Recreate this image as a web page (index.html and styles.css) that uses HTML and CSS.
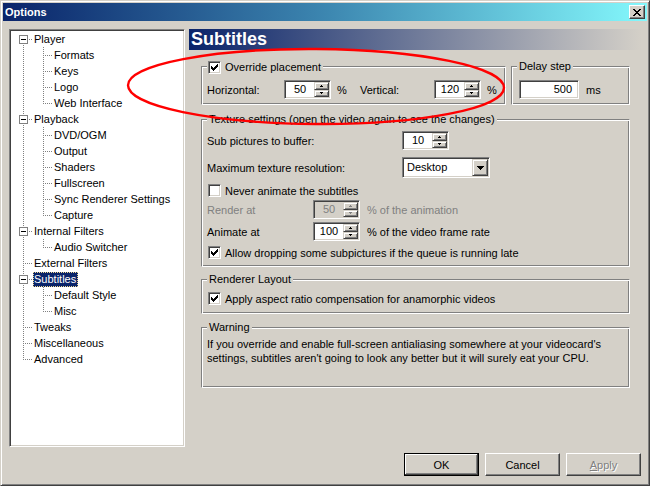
FILE: index.html
```html
<!DOCTYPE html>
<html>
<head>
<meta charset="utf-8">
<title>Options</title>
<link rel="stylesheet" href="styles.css">
</head>
<body>
<div class="window">
  <div class="titlebar">
    <span class="title">Options</span>
    <span class="close"><svg width="8" height="7" viewBox="0 0 8 7" shape-rendering="crispEdges"><path d="M0 0h2v1h-2z M6 0h2v1h-2z M1 1h2v1h-2z M5 1h2v1h-2z M2 2h4v1h-4z M3 3h2v1h-2z M2 4h4v1h-4z M1 5h2v1h-2z M5 5h2v1h-2z M0 6h2v1h-2z M6 6h2v1h-2z" fill="#000"/></svg></span>
  </div>
  <div class="client">
    <div class="main">
      <div class="tree">
        <div class="node"><span class="c c-f"><span class="exp"></span></span><span class="label">Player</span></div>
        <div class="node"><span class="c c-v"></span><span class="c c-t"></span><span class="label">Formats</span></div>
        <div class="node"><span class="c c-v"></span><span class="c c-t"></span><span class="label">Keys</span></div>
        <div class="node"><span class="c c-v"></span><span class="c c-t"></span><span class="label">Logo</span></div>
        <div class="node"><span class="c c-v"></span><span class="c c-l"></span><span class="label">Web Interface</span></div>
        <div class="node"><span class="c c-t"><span class="exp"></span></span><span class="label">Playback</span></div>
        <div class="node"><span class="c c-v"></span><span class="c c-t"></span><span class="label">DVD/OGM</span></div>
        <div class="node"><span class="c c-v"></span><span class="c c-t"></span><span class="label">Output</span></div>
        <div class="node"><span class="c c-v"></span><span class="c c-t"></span><span class="label">Shaders</span></div>
        <div class="node"><span class="c c-v"></span><span class="c c-t"></span><span class="label">Fullscreen</span></div>
        <div class="node"><span class="c c-v"></span><span class="c c-t"></span><span class="label">Sync Renderer Settings</span></div>
        <div class="node"><span class="c c-v"></span><span class="c c-l"></span><span class="label">Capture</span></div>
        <div class="node"><span class="c c-t"><span class="exp"></span></span><span class="label">Internal Filters</span></div>
        <div class="node"><span class="c c-v"></span><span class="c c-l"></span><span class="label">Audio Switcher</span></div>
        <div class="node"><span class="c c-t"></span><span class="label">External Filters</span></div>
        <div class="node"><span class="c c-t"><span class="exp"></span></span><span class="label selected">Subtitles</span></div>
        <div class="node"><span class="c c-v"></span><span class="c c-t"></span><span class="label">Default Style</span></div>
        <div class="node"><span class="c c-v"></span><span class="c c-l"></span><span class="label">Misc</span></div>
        <div class="node"><span class="c c-t"></span><span class="label">Tweaks</span></div>
        <div class="node"><span class="c c-t"></span><span class="label">Miscellaneous</span></div>
        <div class="node"><span class="c c-l"></span><span class="label">Advanced</span></div>
      </div>
      <div class="page">
        <div class="page-header">Subtitles</div>
        <div class="page-body">
          <div class="row-top">
            <div class="group g-override">
              <div class="legend cbl"><span class="cb"><svg class="chk" width="7" height="7" viewBox="0 0 7 7" shape-rendering="crispEdges"><path d="M0 2h1v3h-1z M1 3h1v3h-1z M2 4h1v3h-1z M3 3h1v3h-1z M4 2h1v3h-1z M5 1h1v3h-1z M6 0h1v3h-1z" fill="#000"/></svg></span><span>Override placement</span></div>
              <div class="frow r-place">
                <span class="lbl w-horiz">Horizontal:</span>
                <span class="spin"><span class="spin-val">50</span><span class="spin-btns"><span class="sbtn"><svg width="3" height="2" viewBox="0 0 3 2" shape-rendering="crispEdges"><path d="M1 0h1v1h1v1h-3v-1h1z" fill="#000"/></svg></span><span class="sbtn"><svg width="3" height="2" viewBox="0 0 3 2" shape-rendering="crispEdges"><path d="M0 0h3v1h-1v1h-1v-1h-1z" fill="#000"/></svg></span></span></span>
                <span class="lbl pct w-pct">%</span>
                <span class="lbl w-vert">Vertical:</span>
                <span class="spin"><span class="spin-val">120</span><span class="spin-btns"><span class="sbtn"><svg width="3" height="2" viewBox="0 0 3 2" shape-rendering="crispEdges"><path d="M1 0h1v1h1v1h-3v-1h1z" fill="#000"/></svg></span><span class="sbtn"><svg width="3" height="2" viewBox="0 0 3 2" shape-rendering="crispEdges"><path d="M0 0h3v1h-1v1h-1v-1h-1z" fill="#000"/></svg></span></span></span>
                <span class="lbl pct">%</span>
              </div>
            </div>
            <div class="group g-delay">
              <div class="legend">Delay step</div>
              <div class="frow r-delay">
                <span class="edit">500</span>
                <span class="lbl ms">ms</span>
              </div>
            </div>
          </div>

          <div class="group g-texture">
            <div class="legend">Texture settings (open the video again to see the changes)</div>
            <div class="frow r1">
              <span class="lbl w-long">Sub pictures to buffer:</span>
              <span class="spin"><span class="spin-val">10</span><span class="spin-btns"><span class="sbtn"><svg width="3" height="2" viewBox="0 0 3 2" shape-rendering="crispEdges"><path d="M1 0h1v1h1v1h-3v-1h1z" fill="#000"/></svg></span><span class="sbtn"><svg width="3" height="2" viewBox="0 0 3 2" shape-rendering="crispEdges"><path d="M0 0h3v1h-1v1h-1v-1h-1z" fill="#000"/></svg></span></span></span>
            </div>
            <div class="frow r2">
              <span class="lbl w-long">Maximum texture resolution:</span>
              <span class="combo"><span class="combo-val">Desktop</span><span class="combo-btn"><svg width="7" height="4" viewBox="0 0 7 4" shape-rendering="crispEdges"><path d="M0 0h7v1h-1v1h-1v1h-1v1h-1v-1h-1v-1h-1v-1h-1z" fill="#000"/></svg></span></span>
            </div>
            <div class="frow r3 cbrow">
              <span class="cb"></span><span>Never animate the subtitles</span>
            </div>
            <div class="frow r4">
              <span class="lbl w-short disabled">Render at</span>
              <span class="spin off"><span class="spin-val">50</span><span class="spin-btns"><span class="sbtn"><svg width="3" height="2" viewBox="0 0 3 2" shape-rendering="crispEdges"><path d="M1 0h1v1h1v1h-3v-1h1z" fill="#808080"/></svg></span><span class="sbtn"><svg width="3" height="2" viewBox="0 0 3 2" shape-rendering="crispEdges"><path d="M0 0h3v1h-1v1h-1v-1h-1z" fill="#808080"/></svg></span></span></span>
              <span class="lbl after disabled">% of the animation</span>
            </div>
            <div class="frow r5">
              <span class="lbl w-short">Animate at</span>
              <span class="spin"><span class="spin-val">100</span><span class="spin-btns"><span class="sbtn"><svg width="3" height="2" viewBox="0 0 3 2" shape-rendering="crispEdges"><path d="M1 0h1v1h1v1h-3v-1h1z" fill="#000"/></svg></span><span class="sbtn"><svg width="3" height="2" viewBox="0 0 3 2" shape-rendering="crispEdges"><path d="M0 0h3v1h-1v1h-1v-1h-1z" fill="#000"/></svg></span></span></span>
              <span class="lbl after">% of the video frame rate</span>
            </div>
            <div class="frow r6 cbrow">
              <span class="cb"><svg class="chk" width="7" height="7" viewBox="0 0 7 7" shape-rendering="crispEdges"><path d="M0 2h1v3h-1z M1 3h1v3h-1z M2 4h1v3h-1z M3 3h1v3h-1z M4 2h1v3h-1z M5 1h1v3h-1z M6 0h1v3h-1z" fill="#000"/></svg></span><span>Allow dropping some subpictures if the queue is running late</span>
            </div>
          </div>

          <div class="group g-renderer">
            <div class="legend">Renderer Layout</div>
            <div class="frow r-rl cbrow">
              <span class="cb"><svg class="chk" width="7" height="7" viewBox="0 0 7 7" shape-rendering="crispEdges"><path d="M0 2h1v3h-1z M1 3h1v3h-1z M2 4h1v3h-1z M3 3h1v3h-1z M4 2h1v3h-1z M5 1h1v3h-1z M6 0h1v3h-1z" fill="#000"/></svg></span><span>Apply aspect ratio compensation for anamorphic videos</span>
            </div>
          </div>

          <div class="group g-warning">
            <div class="legend">Warning</div>
            <p class="warn-text">If you override and enable full-screen antialiasing somewhere at your videocard's<br>settings, subtitles aren't going to look any better but it will surely eat your CPU.</p>
          </div>
        </div>
      </div>
    </div>
    <div class="buttons">
      <span class="btn default">OK</span>
      <span class="btn">Cancel</span>
      <span class="btn disabled-btn"><span class="u">A</span>pply</span>
    </div>
  </div>
  <svg class="ellipse" width="650" height="486" viewBox="0 0 650 486">
    <ellipse cx="316" cy="86.5" rx="188" ry="37.5" transform="rotate(0.4 316 86.5)" fill="none" stroke="#ff0000" stroke-width="2.4"/>
  </svg>
</div>
</body>
</html>
```

FILE: styles.css
```css
* { box-sizing: border-box; }

body {
  margin: 0;
  font-family: "Liberation Sans", Arial, sans-serif;
  font-size: 11px;
  color: #000;
  background: #d4d0c8;
}

.window {
  position: relative;
  width: 650px;
  height: 486px;
  background: #d4d0c8;
  border: 1px solid;
  border-color: #d4d0c8 #404040 #404040 #d4d0c8;
  box-shadow: inset 1px 1px #fff, inset -1px -1px #808080;
  padding: 2px;
  display: flex;
  flex-direction: column;
  overflow: hidden;
}

/* title bar */
.titlebar {
  height: 18px;
  flex: none;
  display: flex;
  align-items: center;
  padding: 0 2px;
  background: linear-gradient(to right, #0a246a 0%, #3c86b0 50%, #84f8fc 100%);
}
.title {
  flex: 1;
  color: #fff;
  font-weight: bold;
  line-height: 18px;
}
.close {
  width: 16px;
  height: 14px;
  display: flex;
  align-items: center;
  justify-content: center;
  background: #d4d0c8;
  border: 1px solid;
  border-color: #fff #404040 #404040 #fff;
  box-shadow: inset -1px -1px #808080;
}
.close svg { display: block; margin-left: -1px; }

/* client area */
.client {
  flex: 1;
  display: flex;
  flex-direction: column;
  padding: 8px 5px 0 6px;
}
.main {
  display: flex;
  gap: 4px;
  height: 418px;
  flex: none;
}

/* tree */
.tree {
  width: 176px;
  flex: none;
  background: #fff;
  border: 1px solid;
  border-color: #808080 #fff #fff #808080;
  box-shadow: inset 1px 1px #404040, inset -1px -1px #d4d0c8;
  padding: 1px 1px 1px 3px;
}
.node {
  display: flex;
  height: 16px;
}
.c {
  display: block;
  width: 20px;
  height: 16px;
  flex: none;
  background-repeat: no-repeat;
}
.c-v {
  background-image: repeating-linear-gradient(to bottom, #808080 0 1px, transparent 1px 2px);
  background-position: 10px 0;
  background-size: 1px 16px;
}
.c-t {
  background-image: repeating-linear-gradient(to bottom, #808080 0 1px, transparent 1px 2px),
                    repeating-linear-gradient(to right, #808080 0 1px, transparent 1px 2px);
  background-position: 10px 0, 12px 8px;
  background-size: 1px 16px, 8px 1px;
}
.c-f {
  background-image: repeating-linear-gradient(to bottom, #808080 0 1px, transparent 1px 2px),
                    repeating-linear-gradient(to right, #808080 0 1px, transparent 1px 2px);
  background-position: 10px 8px, 12px 8px;
  background-size: 1px 8px, 8px 1px;
}
.c-l {
  background-image: repeating-linear-gradient(to bottom, #808080 0 1px, transparent 1px 2px),
                    repeating-linear-gradient(to right, #808080 0 1px, transparent 1px 2px);
  background-position: 10px 0, 12px 8px;
  background-size: 1px 9px, 8px 1px;
}
.exp {
  display: flex;
  align-items: center;
  justify-content: center;
  width: 9px;
  height: 9px;
  margin: 4px 0 0 6px;
  border: 1px solid #808080;
  background: #fff;
}
.exp::after {
  content: "";
  width: 5px;
  height: 1px;
  background: #000;
}
.label {
  height: 15px;
  line-height: 15px;
  margin-top: 1px;
  padding: 0 2px 0 1px;
  white-space: nowrap;
}
.label.selected {
  background: #0a246a;
  color: #fff;
  outline: 1px dotted #f0d890;
  outline-offset: -1px;
}

/* right page */
.page {
  flex: 1;
  display: flex;
  flex-direction: column;
}
.page-header {
  height: 21px;
  flex: none;
  background: linear-gradient(to right, #0a246a, #d4d0c8);
  color: #fff;
  font-weight: bold;
  font-size: 18px;
  line-height: 21px;
  padding-left: 2px;
}
.page-body {
  padding: 0 12px;
  display: flex;
  flex-direction: column;
}
.row-top {
  display: flex;
  gap: 5px;
  margin-top: 16px;
}

/* group boxes (etched) */
.group {
  border: 1px solid;
  border-color: #808080 #fff #fff #808080;
  box-shadow: inset 1px 1px #fff, inset -1px -1px #808080;
  padding: 0 5px;
  display: flex;
  flex-direction: column;
}
.legend {
  align-self: flex-start;
  background: #d4d0c8;
  height: 13px;
  line-height: 13px;
  padding: 0 2px;
  margin-top: -7px;
  white-space: nowrap;
}
.legend.cbl {
  display: flex;
  align-items: center;
  gap: 4px;
  margin-top: -6px;
  padding: 0 2px 0 1px;
}

.g-override { width: 305px; height: 39px; padding-bottom: 5px; }
.g-delay { width: 119px; height: 39px; padding-bottom: 5px; }
.g-texture { margin-top: 14px; padding-bottom: 7px; }
.g-renderer { margin-top: 12px; padding-bottom: 8px; }
.g-warning { margin-top: 13px; padding-bottom: 22px; }

.frow {
  display: flex;
  align-items: center;
  white-space: nowrap;
}
.r-place { margin-top: 6px; height: 19px; }
.r-delay { margin-top: 7px; height: 19px; }
.r1 { margin-top: 5px; height: 19px; }
.r2 { margin-top: 7px; height: 21px; }
.r3 { margin-top: 6px; height: 13px; }
.r4 { margin-top: 3px; height: 19px; }
.r5 { margin-top: 3px; height: 19px; }
.r6 { margin-top: 5px; height: 13px; }
.r-rl { margin-top: 6px; height: 13px; }

.cbrow { margin-left: 1px; gap: 4px; }

.lbl { flex: none; }
.w-horiz { width: 77px; }
.pct { margin-left: 6px; }
.w-pct { width: 23px; }
.w-vert { width: 74px; }
.w-long { width: 195px; }
.w-short { width: 106px; }
.after { margin-left: 7px; }
.ms { margin-left: 7px; }
.disabled { color: #808080; }

/* checkbox */
.cb {
  width: 13px;
  height: 13px;
  flex: none;
  background: #fff;
  border: 1px solid;
  border-color: #808080 #fff #fff #808080;
  box-shadow: inset 1px 1px #404040, inset -1px -1px #d4d0c8;
}
.chk { display: block; margin: 2px 0 0 2px; }

/* spin edit */
.spin {
  width: 47px;
  height: 19px;
  flex: none;
  display: flex;
  background: #fff;
  border: 1px solid;
  border-color: #808080 #fff #fff #808080;
  box-shadow: inset 1px 1px #404040, inset -1px -1px #d4d0c8;
  padding: 1px;
}
.spin.off { background: #d4d0c8; color: #808080; }
.spin-val {
  flex: 1;
  text-align: center;
  line-height: 15px;
}
.spin-btns {
  width: 15px;
  display: flex;
  flex-direction: column;
}
.sbtn {
  flex: 1;
  display: flex;
  align-items: center;
  justify-content: center;
  background: #d4d0c8;
  border: 1px solid;
  border-color: #d4d0c8 #404040 #404040 #d4d0c8;
  box-shadow: inset 1px 1px #fff, inset -1px -1px #808080;
}
.sbtn svg { display: block; }

/* plain edit */
.edit {
  width: 60px;
  height: 19px;
  flex: none;
  margin-left: 2px;
  background: #fff;
  border: 1px solid;
  border-color: #808080 #fff #fff #808080;
  box-shadow: inset 1px 1px #404040, inset -1px -1px #d4d0c8;
  text-align: right;
  line-height: 17px;
  padding-right: 6px;
}

/* combo */
.combo {
  width: 88px;
  height: 21px;
  flex: none;
  display: flex;
  background: #fff;
  border: 1px solid;
  border-color: #808080 #fff #fff #808080;
  box-shadow: inset 1px 1px #404040, inset -1px -1px #d4d0c8;
  padding: 1px;
}
.combo-val {
  flex: 1;
  line-height: 17px;
  padding-left: 3px;
}
.combo-btn {
  width: 16px;
  display: flex;
  align-items: center;
  justify-content: center;
  background: #d4d0c8;
  border: 1px solid;
  border-color: #d4d0c8 #404040 #404040 #d4d0c8;
  box-shadow: inset 1px 1px #fff, inset -1px -1px #808080;
}
.combo-btn svg { display: block; }

.warn-text {
  margin: 3px 0 0 0;
  line-height: 14px;
  white-space: nowrap;
}

/* buttons */
.buttons {
  display: flex;
  justify-content: flex-end;
  gap: 6px;
  margin-top: 6px;
  padding-right: 1px;
}
.btn {
  width: 75px;
  height: 23px;
  display: flex;
  align-items: center;
  justify-content: center;
  background: #d4d0c8;
  border: 1px solid;
  border-color: #fff #404040 #404040 #fff;
  box-shadow: inset -1px -1px #808080, inset 1px 1px #d4d0c8;
}
.btn.default {
  border-color: #000;
  box-shadow: inset -1px -1px #404040, inset 1px 1px #fff, inset -2px -2px #808080;
}
.disabled-btn {
  color: #808080;
  text-shadow: 1px 1px #fff;
}
.u { text-decoration: underline; }

/* annotation */
.ellipse {
  position: absolute;
  left: -1px;
  top: -1px;
  pointer-events: none;
}
```
